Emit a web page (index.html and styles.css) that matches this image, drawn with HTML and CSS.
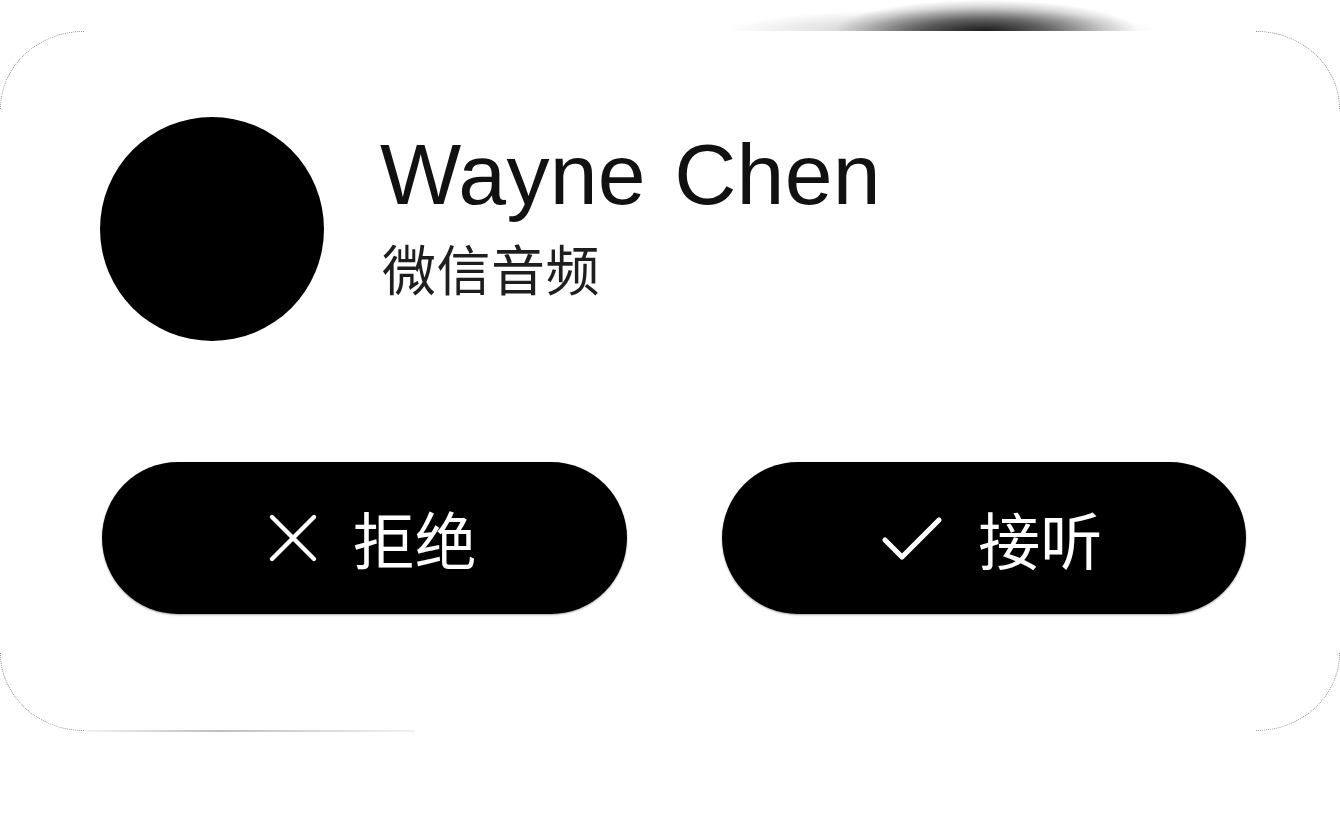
FILE: index.html
```html
<!DOCTYPE html>
<html lang="zh-CN">
<head>
<meta charset="utf-8">
<title>来电</title>
<link rel="stylesheet" href="styles.css">
</head>
<body>
<div class="stage">
  <div class="top-shadow"></div>
  <div class="card">
    <span class="corner tl"></span>
    <span class="corner tr"></span>
    <span class="corner bl"></span>
    <span class="corner br"></span>
    <div class="caller">
      <div class="avatar"></div>
      <div class="info">
        <div class="name">Wayne Chen</div>
        <div class="sub">微信音频</div>
      </div>
    </div>
    <div class="actions">
      <button class="btn">
        <svg class="icon" viewBox="0 0 50 50" width="50" height="50">
          <path d="M4 4 L46 46 M46 4 L4 46" stroke="#fff" stroke-width="4.4" stroke-linecap="round" fill="none"/>
        </svg>
        <span class="label">拒绝</span>
      </button>
      <button class="btn">
        <svg class="icon" viewBox="0 0 62 46" width="62" height="46">
          <path d="M4 25 L21 42 L58 5" stroke="#fff" stroke-width="5.2" stroke-linecap="round" stroke-linejoin="round" fill="none"/>
        </svg>
        <span class="label">接听</span>
      </button>
    </div>
    <div class="bottom-line"></div>
  </div>
</div>
</body>
</html>
```

FILE: styles.css
```css
html, body {
  margin: 0;
  padding: 0;
  background: #ffffff;
}

body {
  font-family: "Liberation Sans", "Noto Sans CJK SC", sans-serif;
  color: #000;
  width: 1340px;
  height: 818px;
  overflow: hidden;
}

.stage {
  position: relative;
  padding-top: 31px;
}

.top-shadow {
  position: absolute;
  top: 0;
  left: 640px;
  width: 540px;
  height: 31px;
  background:
    radial-gradient(ellipse 28% 100% at 64% 100%, rgba(0,0,0,0.85) 0%, rgba(0,0,0,0.55) 40%, rgba(0,0,0,0.15) 80%, rgba(0,0,0,0) 100%),
    radial-gradient(ellipse 40% 70% at 56% 100%, rgba(0,0,0,0.3) 0%, rgba(0,0,0,0.1) 60%, rgba(0,0,0,0) 100%);
}

.card {
  position: relative;
  box-sizing: border-box;
  width: 1340px;
  height: 700px;
  background: #fff;
  border-radius: 85px;
  padding: 86px 94px 0 100px;
}

.corner {
  position: absolute;
  width: 84px;
  height: 78px;
  box-sizing: border-box;
  border: 0 dotted rgba(0, 0, 0, 0.45);
}

.corner.tl {
  top: 0;
  left: 0;
  border-top-width: 1.5px;
  border-left-width: 1.5px;
  border-top-left-radius: 84px 78px;
}

.corner.tr {
  top: 0;
  right: 0;
  border-top-width: 1.5px;
  border-right-width: 1.5px;
  border-top-right-radius: 84px 78px;
}

.corner.bl {
  bottom: 0;
  left: 0;
  border-bottom-width: 1.5px;
  border-left-width: 1.5px;
  border-bottom-left-radius: 84px 78px;
}

.corner.br {
  bottom: 0;
  right: 0;
  border-bottom-width: 1.5px;
  border-right-width: 1.5px;
  border-bottom-right-radius: 84px 78px;
}

.caller {
  display: flex;
  align-items: flex-start;
  gap: 56px;
}

.avatar {
  width: 224px;
  height: 224px;
  border-radius: 50%;
  background: #000;
  flex: none;
}

.info {
  display: flex;
  flex-direction: column;
  margin-top: 7px;
}

.name {
  font-family: "Liberation Sans", sans-serif;
  font-size: 86px;
  line-height: 100px;
  color: #111;
  letter-spacing: 0.3px;
  word-spacing: 4px;
}

.sub {
  font-family: "Noto Sans CJK SC", sans-serif;
  font-weight: 400;
  font-size: 54px;
  line-height: 64px;
  color: #1e1e1e;
  margin-top: 12px;
  margin-left: 2px;
  letter-spacing: 0.5px;
}

.actions {
  display: flex;
  gap: 95px;
  margin-top: 121px;
  padding-left: 2px;
}

.btn {
  width: 525px;
  height: 152px;
  border: none;
  border-radius: 76px;
  background: #000;
  color: #fff;
  display: flex;
  align-items: center;
  justify-content: center;
  gap: 35px;
  padding: 0 0 0 16px;
  font-family: "Noto Sans CJK SC", sans-serif;
  box-shadow: 0 1px 2px rgba(0,0,0,0.35);
}

.label {
  font-size: 62px;
  font-weight: 400;
  line-height: 1;
  color: #fff;
}

.icon {
  display: block;
  flex: none;
}

.bottom-line {
  position: absolute;
  left: 85px;
  bottom: -1px;
  width: 330px;
  height: 2px;
  background: linear-gradient(to right, rgba(0,0,0,0.05), rgba(0,0,0,0.25) 40%, rgba(0,0,0,0.05));
}
```
